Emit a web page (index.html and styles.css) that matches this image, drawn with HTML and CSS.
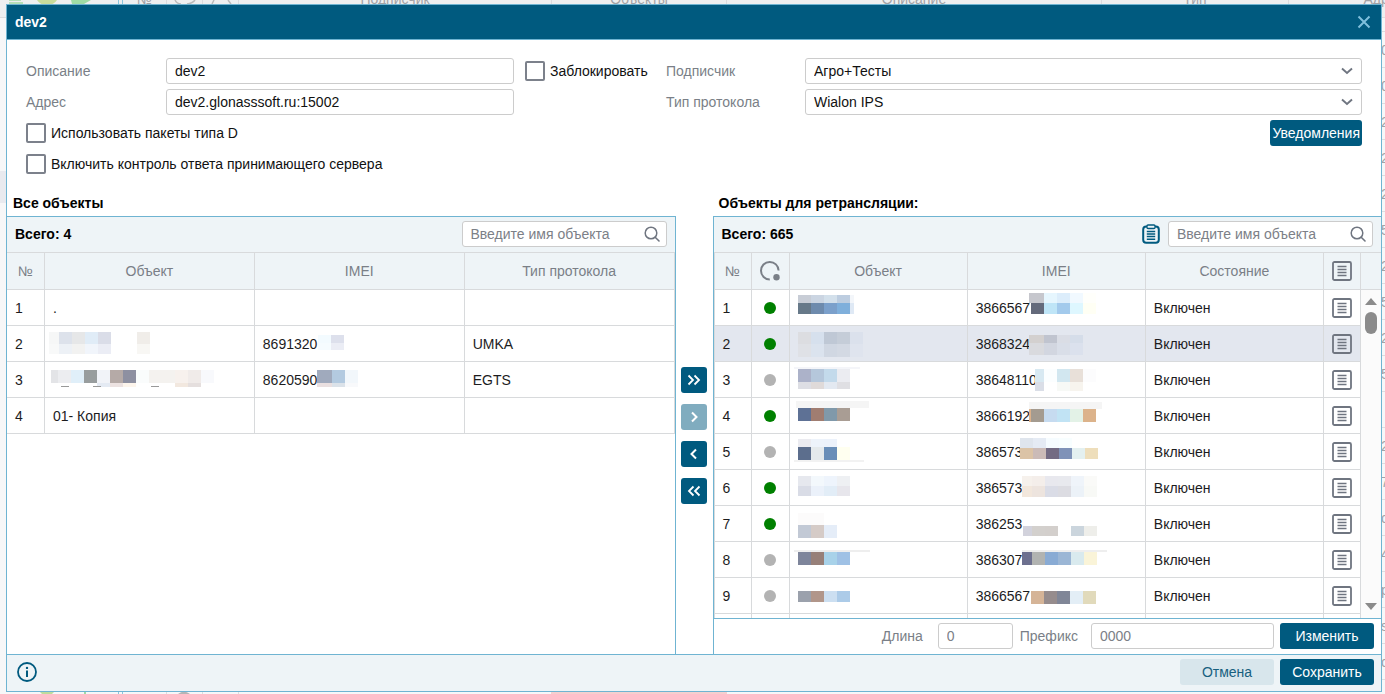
FILE: index.html
```html
<!DOCTYPE html>
<html lang="ru">
<head>
<meta charset="utf-8">
<title>dev2</title>
<link rel="stylesheet" href="styles.css">
</head>
<body>
<svg class="sprite" aria-hidden="true">
  <symbol id="i-search" viewBox="0 0 16 16"><circle cx="7" cy="7" r="5.8" fill="none" stroke="currentColor" stroke-width="1.5"/><path d="M11.2 11.2L15 15" fill="none" stroke="currentColor" stroke-width="1.6" stroke-linecap="round"/></symbol>
  <symbol id="i-down" viewBox="0 0 12 8"><path d="M1 1.5L6 6l5-4.500" fill="none" stroke="currentColor" stroke-width="1.900"/></symbol>
  <symbol id="i-list" viewBox="0 0 20 20"><rect x="1" y="1" width="18" height="18" rx="1.500" fill="none" stroke="currentColor" stroke-width="1.800"/><path d="M5.500 5.500h9M5.500 8.500h9M5.500 11.500h9M5.500 14.500h9" stroke="currentColor" stroke-width="1.400"/></symbol>
  <symbol id="i-clip" viewBox="0 0 18 20"><rect x="1.200" y="2.500" width="15.600" height="16.300" rx="3" fill="none" stroke="currentColor" stroke-width="2"/><rect x="5" y="1" width="8" height="3.500" rx="1" fill="#eef4f7" stroke="currentColor" stroke-width="1.300"/><path d="M4.800 7.500h8.400M4.800 10h8.400M4.800 12.500h8.400M4.800 15.200h8.400" stroke="currentColor" stroke-width="1.400"/></symbol>
  <symbol id="i-right" viewBox="0 0 14 14"><path d="M5 2.500L9.500 7 5 11.500" fill="none" stroke="currentColor" stroke-width="2"/></symbol>
  <symbol id="i-right2" viewBox="0 0 14 14"><path d="M1.500 2.500L6 7l-4.500 4.500M7.500 2.500L12 7l-4.500 4.500" fill="none" stroke="currentColor" stroke-width="1.800"/></symbol>
  <symbol id="i-left" viewBox="0 0 14 14"><path d="M9 2.500L4.500 7 9 11.500" fill="none" stroke="currentColor" stroke-width="2"/></symbol>
  <symbol id="i-left2" viewBox="0 0 14 14"><path d="M6.500 2.500L2 7l4.500 4.500M12.500 2.500L8 7l4.500 4.500" fill="none" stroke="currentColor" stroke-width="1.800"/></symbol>
</svg>

<div class="page" aria-hidden="true">
  <div class="page-head">
    <span class="c-tools"></span><span class="c-num">№</span><span class="c-ico"></span><span class="c-ico"></span><span class="c-sub">Подписчик</span><span class="c-obj">Объекты</span><span class="c-desc">Описание</span><span class="c-type">Тип</span><span class="c-addr">Адрес</span>
  </div>
  <div class="page-col">
    <span>0</span><span>0</span><span>2</span><span>2</span><span>2</span><span>5</span><span>2</span><span>5</span><span>2</span><span>5</span><span></span><span>2</span><span>7</span><span>c</span><span>4</span><span>p</span><span>s</span><span>c</span>
  </div>
  <div class="page-row-left"></div>
  <svg class="page-top" width="240" height="5" viewBox="0 0 240 5">
    <path d="M9 0h12M9 3h14" stroke="#a5dba5" stroke-width="1.500"/><path d="M37 0h20q-3 5-10 5t-10-5z" fill="#c9dc9c"/><path d="M71 0h20l-7 4h-12z" fill="#9fdca5"/>
    <path d="M118.500 0v5M122.500 0v5" stroke="#8cc5dc"/><path d="M175 0q2 4 6 4M187 4q6-1 8-4M214 0l-2 4M228 0l3 4" stroke="#bbb" fill="none" stroke-width="1.500"/>
  </svg>
  <svg class="page-bottom" width="760" height="3" viewBox="0 0 760 3">
    <path d="M39 0h16l-3 3h-10z" fill="#bfdc9c"/><path d="M84 0h2v3h-2z" fill="#9fdca5"/><path d="M118.500 0v3M122.500 0v3" stroke="#8cc5dc"/><path d="M166.500 0v3M202.500 0v3M238.500 0v3" stroke="#ddd"/><path d="M178 3q6-5 12 0z" fill="#b5b5b5"/><path d="M551 0h176v3H551z" fill="#f5cfcf"/>
  </svg>
</div>

<div class="dialog" role="dialog" aria-labelledby="title">
  <header class="dialog-head">
    <h1 id="title">dev2</h1>
    <button class="close" type="button" aria-label="Закрыть"><svg width="14" height="14" viewBox="0 0 14 14"><path d="M1.500 1.500l11 11M12.500 1.500l-11 11" stroke="currentColor" stroke-width="2"/></svg></button>
  </header>

  <form class="form">
    <label for="f-desc">Описание</label>
    <input class="field" id="f-desc" type="text" value="dev2">
    <label class="tick tick-lock"><input type="checkbox">Заблокировать</label>
    <label for="f-sub">Подписчик</label>
    <div class="select"><select class="field" id="f-sub"><option>Агро+Тесты</option></select><svg width="12" height="8"><use href="#i-down"/></svg></div>

    <label for="f-addr">Адрес</label>
    <input class="field" id="f-addr" type="text" value="dev2.glonasssoft.ru:15002">
    <label class="col-4" for="f-type">Тип протокола</label>
    <div class="select"><select class="field" id="f-type"><option>Wialon IPS</option></select><svg width="12" height="8"><use href="#i-down"/></svg></div>

    <label class="tick wide"><input type="checkbox">Использовать пакеты типа D</label>
    <button class="btn notify" type="button">Уведомления</button>
    <label class="tick wide"><input type="checkbox">Включить контроль ответа принимающего сервера</label>
  </form>

  <div class="lists">
    <section class="list list-all">
      <h2>Все объекты</h2>
      <div class="panel">
        <div class="bar"><strong>Всего: 4</strong>
          <div class="search"><input class="field" type="text" placeholder="Введите имя объекта" aria-label="Поиск по всем объектам"><svg width="16" height="16"><use href="#i-search"/></svg></div>
        </div>
        <table>
          <colgroup><col class="w-num"><col><col><col></colgroup>
          <thead><tr><th>№</th><th>Объект</th><th>IMEI</th><th>Тип протокола</th></tr></thead>
          <tbody id="all-rows"></tbody>
        </table>
      </div>
    </section>

    <div class="transfer">
      <button class="btn" type="button" aria-label="Добавить все"><svg width="14" height="14"><use href="#i-right2"/></svg></button>
      <button class="btn" type="button" aria-label="Добавить" disabled><svg width="14" height="14"><use href="#i-right"/></svg></button>
      <button class="btn" type="button" aria-label="Убрать"><svg width="14" height="14"><use href="#i-left"/></svg></button>
      <button class="btn" type="button" aria-label="Убрать все"><svg width="14" height="14"><use href="#i-left2"/></svg></button>
    </div>

    <section class="list list-relay">
      <h2>Объекты для ретрансляции:</h2>
      <div class="panel">
        <div class="bar"><strong>Всего: 665</strong>
          <button class="icon clip" type="button" aria-label="Вставить список"><svg width="18" height="20"><use href="#i-clip"/></svg></button>
          <div class="search"><input class="field" type="text" placeholder="Введите имя объекта" aria-label="Поиск по ретранслируемым объектам"><svg width="16" height="16"><use href="#i-search"/></svg></div>
        </div>
        <div class="scroll">
          <div class="scroll-body">
            <table>
              <colgroup><col class="w-short"><col class="w-num"><col><col><col><col class="w-menu"></colgroup>
              <thead><tr><th>№</th><th aria-label="Связь"><svg width="22" height="22" viewBox="0 0 22 22"><path d="M19.600 10.500A8.800 8.800 0 1 0 10.800 19.500" fill="none" stroke="currentColor" stroke-width="2"/><circle cx="17.500" cy="17.200" r="3.200" fill="currentColor"/></svg></th><th>Объект</th><th>IMEI</th><th>Состояние</th><th><button class="icon" type="button" aria-label="Меню"><svg width="20" height="20"><use href="#i-list"/></svg></button></th></tr></thead>
              <tbody id="relay-rows"></tbody>
            </table>
          </div>
          <div class="track" aria-hidden="true"><div class="track-head"></div><i class="up"></i><i class="thumb"></i><i class="down"></i></div>
        </div>
        <div class="edit">
          <label for="f-len">Длина</label><input class="field len" id="f-len" type="text" placeholder="0">
          <label for="f-pre">Префикс</label><input class="field pre" id="f-pre" type="text" placeholder="0000">
          <button class="btn action" type="button">Изменить</button>
        </div>
      </div>
    </section>
  </div>

  <footer class="dialog-foot">
    <button class="icon info" type="button" aria-label="Справка"><svg width="20" height="20" viewBox="0 0 20 20"><circle cx="10" cy="10" r="9" fill="none" stroke="currentColor" stroke-width="1.800"/><path d="M10 8.500V15" stroke="currentColor" stroke-width="2"/><circle cx="10" cy="5.900" r="1.200" fill="currentColor"/></svg></button>
    <button class="btn action cancel" type="button">Отмена</button>
    <button class="btn action" type="button">Сохранить</button>
  </footer>
</div>
<script src="rows.js"></script>
</body>
</html>
```
FILE: styles.css
```css
* { box-sizing: border-box; }
body { margin: 0; height: 100vh; overflow: hidden; background: #f7f7f8; color: #111; font: 14px/16px "Liberation Sans", Arial, sans-serif; }
h1, h2 { margin: 0; font-size: 14px; line-height: 16px; }
button, input, select { font: inherit; }
button { padding: 0; border: 0; cursor: pointer; }
svg { display: block; flex: none; }
.sprite { position: absolute; width: 0; height: 0; }

/* dimmed page under the dialog */
.page { position: absolute; inset: 0; overflow: hidden; color: #a3a3a6; }
.page-head { display: flex; height: 37px; margin-top: -19px; background: #eeeff0; border-bottom: 1px solid #dddddf; }
.page-head span { display: flex; flex: none; align-items: center; justify-content: center; border-right: 1px solid #dcdcde; }
.c-tools { width: 123px; }
.c-num { width: 44px; }
.c-ico { width: 36px; }
.c-sub { width: 313px; }
.c-obj { width: 175px; }
.c-desc { width: 375px; }
.c-type { width: 187px; }
.c-addr { width: 190px; }
.page-col { display: flex; flex-direction: column; width: 4px; margin: 13px 0 0 auto; border-top: 1px solid #dddddf; }
.page-col span { flex: none; height: 36px; padding-top: 10px; border-bottom: 1px solid #dddddf; }
.page-row-left { position: absolute; left: 0; top: 171px; width: 6px; height: 32px; background: #e9eaef; }
.page-top { position: absolute; left: 0; top: 0; }
.page-bottom { position: absolute; left: 0; bottom: 0; }

.dialog { position: absolute; inset: 4px 3px 2px 6px; display: flex; flex-direction: column; background: #fff; border: 1px solid #6fb4d2; }
.dialog-head { display: flex; align-items: center; justify-content: space-between; height: 35px; padding: 0 10px 0 8px; background: #005a7f; border-bottom: 1px solid #6fb4d2; color: #fff; }
.close { background: none; color: #7fbfdc; }

.field { width: 100%; min-width: 0; height: 26px; padding: 0 8px; border: 1px solid #ccc; border-radius: 3px; background: #fff; color: #111; outline: 0; }
.field::placeholder { color: #7c8087; opacity: 1; }
select.field { appearance: none; }
.select, .search { display: grid; align-items: center; }
.select > *, .search > * { grid-area: 1 / 1; }
.select svg, .search svg { justify-self: end; color: #6f7580; pointer-events: none; }
.select svg { margin-right: 9px; }
.search svg { margin-right: 7px; }

.btn { height: 26px; border-radius: 3px; background: #005a7f; color: #fff; }
.btn:disabled { background: #80acbf; cursor: default; }
.icon { display: inline-flex; background: none; color: #6f7580; }

.form { display: grid; grid-template-columns: 140px 348fr 152px 139px 557fr; grid-auto-rows: 26px; gap: 5px 0; align-items: center; padding: 18px 19px 0; color: #7a7f87; }
.tick { display: flex; align-items: center; gap: 5px; color: #111; }
.tick input { appearance: none; width: 20px; height: 20px; margin: 0; border: 2px solid #7c818b; border-radius: 2px; background: #fff; }
.tick-lock { padding-left: 11px; }
.col-4 { grid-column: 4; }
.wide { grid-column: 1 / 4; }
.notify { grid-column: 5; justify-self: end; padding: 0 2px; }

.lists { display: grid; grid-template-columns: minmax(0, 1fr) 37px minmax(0, 1fr); flex: 1; min-height: 0; padding-top: 18px; }
.list { display: flex; flex-direction: column; min-height: 0; color: #000; }
.list h2 { padding: 0 6px 5px; }
.panel { display: flex; flex-direction: column; flex: 1; min-height: 0; border-top: 1px solid #6fb4d2; }
.list-all .panel { border-right: 1px solid #6fb4d2; }
.list-relay .panel { border-left: 1px solid #6fb4d2; }
.bar { display: flex; flex: none; align-items: center; height: 36px; padding: 0 8px 1px; background: #eef4f7; border-bottom: 1px solid #d8dadc; }
.bar strong { flex: 1; }
.search { width: 205px; }
.clip { margin-right: 8px; color: #005a7f; }
.transfer { display: flex; flex-direction: column; align-items: center; justify-content: center; gap: 11px; padding-top: 21px; }
.transfer .btn { display: grid; place-items: center; width: 26px; }

table { width: 100%; table-layout: fixed; border-collapse: separate; border-spacing: 0; color: #1c1c1e; }
.w-num { width: 38px; }
.w-short, .w-menu { width: 37px; }
th { height: 37px; padding: 0; background: #eef4f7; border: solid #d8dadc; border-width: 0 1px 1px 0; color: #7a7f87; font-weight: 400; }
td { height: 36px; padding: 0 8px; border: solid #d8dadc; border-width: 0 1px 1px 0; }
td .icon, th .icon { display: flex; width: 20px; margin: 0 auto; }
th svg, .dot { margin: 0 auto; }
.center { padding: 0; text-align: center; }
.cell { display: flex; align-items: center; height: 35px; }
.mask { overflow: visible; }
.current td { background: #e3e7ef; }
.dot { display: block; width: 12px; height: 12px; border-radius: 50%; background: #b3b3b3; }
.dot.on { background: #008000; }

.scroll { display: flex; flex: 1; min-height: 0; border-bottom: 1px solid #6fb4d2; }
.scroll-body { flex: 1; min-width: 0; overflow: hidden; border-left: 1px solid #d8dadc; }
.track { display: flex; flex-direction: column; align-items: center; width: 20px; padding-bottom: 8px; background: #fbfbfb; }
.track-head { flex: none; width: 100%; height: 37px; background: #eef4f7; border-bottom: 1px solid #d8dadc; }
.up, .down { border: solid transparent; border-width: 0 6px; }
.up { margin-top: 8px; border-bottom: 7px solid #8b8b8b; }
.down { margin-top: auto; border-top: 7px solid #8b8b8b; }
.thumb { width: 12px; height: 22px; margin-top: 7px; border-radius: 6px; background: #8b8b8b; }

.edit { display: flex; align-items: center; justify-content: flex-end; height: 35px; padding: 0 7px 1px 0; color: #7a7f87; }
.len { width: 75px; margin: 0 7px 0 15px; }
.pre { width: 183px; margin: 0 6px 0 13px; }
.action { width: 94px; }

.lists + .dialog-foot { border-top: 1px solid #6fb4d2; }
.dialog-foot { display: flex; flex: none; align-items: center; gap: 6px; height: 37px; padding: 0 7px 2px 10px; background: #eef4f7; }
.info { margin-right: auto; color: #005a7f; }
.cancel { background: #d8e6ec; color: #17607f; }
```
FILE: rows.js
```js
// Hidden parts of names and numbers are drawn as colour strips:
// [x, y, height, colours, width of a square]; "-" leaves a gap.
function mask(strips) {
  if (!strips) return "";
  let out = "";
  for (const [x, y, h, colours, w = 13] of strips) {
    colours.split(" ").forEach((c, i) => {
      if (c !== "-") out += `<rect x="${x + i * w}" y="${y}" width="${w}" height="${h}" fill="#${c}"/>`;
    });
  }
  return `<svg class="mask" width="80" height="35" shape-rendering="crispEdges" aria-hidden="true">${out}</svg>`;
}

const cell = (text, strips) => `<td><div class="cell">${text}${mask(strips)}</div></td>`;

const all = [
  [".", null, "", null, ""],
  ["", [[-4, 6, 12, "f6f7f7", 10], [6, 6, 12, "dde2eb e6e7e8 e0ecf7 dadde8 - - f0ede9"], [-4, 18, 10, "f8f9f9", 10], [6, 18, 10, "edf1f6 f2f2f1 f1f5fb ebedf5 - - f8f7f4"]],
    "8691320", [[1, 9, 8, "f3fbff dde0ec"], [1, 17, 7, "f6fcff ebedf5"]], "UMKA"],
  ["", [[-2, 8, 13, "e3e4e7", 7], [5, 8, 13, "ecedf0 e0eff9 989d9e f1f3f8 b5aaa7 8e90a1 fafcfc f4f2ef f4f2ef f7f1ed f0ebe9 f8f9fc"], [44, 21, 4, "e4eaf3 ece2e1 fdf5ec - - - f2e8df e5dfde"], [8, 24, 1, "999", 8], [40, 24, 1, "999", 8], [98, 24, 1, "999", 8]],
    "8620590", [[0, 8, 13, "a0aabd", 15], [15, 8, 13, "b3cae0 f2f7fb"], [0, 21, 4, "e9dfe0", 15], [15, 21, 4, "dbe2e9 f8f9fb"]], "EGTS"],
  ["01- Копия", null, "", null, ""]
];

const relay = [
  [1, [[0, 5, 8, "c8cdd6 cbd5e2 d3e0eb bdcde0"], [52, 5, 8, "f3f6fa", 4], [0, 13, 11, "677989 6e8bad 7ba0cb 7fafdb"], [52, 13, 11, "dfe9f5", 4]],
    "3866567", [[-1, 3, 10, "c6c7cd", 15], [14, 3, 10, "e6f6fe dcedfb f1f9ff fffffb"], [1, 13, 11, "646a7b bfe5f7 a3caec def7ff fffff4"]]],
  [1, [[0, 6, 12, "dcdde1 d6e0ed bfc8d5 c5cdd8 dbe1ec"], [0, 18, 13, "dfe1e6 dbe3ee d0d7e2 d3d9e3 dfe4ee"]],
    "3868324", [[-1, 9, 8, "d3d0cf", 15], [14, 9, 8, "c0c4cf dadde5 d5dde9"], [-1, 17, 12, "d9dade", 15], [14, 17, 12, "d2d6e0 d9dee8 dbe1ed"]]],
  [0, [[-4, 5, 2, "f4f5f9", 66], [0, 7, 13, "acb2c9 b5c7db c3daeb ebecf1"], [0, 20, 7, "dddee4 dfdad9 e3e9f1 dfdfe3"]],
    "38648110", [[-2, 7, 13, "d8e9f2", 9], [7, 7, 13, "fbfeff d2e7f0 e8e0d9 fcfcfd"], [-2, 20, 9, "dadee7", 9], [20, 20, 9, "f7f9f6 f7f4ee"]]],
  [1, [[-2, 3, 7, "f5f5f5", 73], [0, 10, 13, "5e7195 a07d71 8099aa a99d94"]],
    "3866192", [[-1, 4, 7, "f5f5f5", 73], [-1, 11, 13, "dcb18a", 2], [1, 11, 13, "a49b90 c6dbf0 c1e3f4 e3f2e7 dcb38b"]]],
  [0, [[0, 5, 8, "ebebf0 edf3fb ecf2fb"], [0, 13, 13, "5c6e8d e4e9ec 698eb8 fffff0"], [-4, 26, 2, "f2f2f2", 70]],
    "386573", [[-2, 4, 10, "dfe5ed e5ebf4 f6fcff f8feff"], [-2, 14, 11, "dbc3a6 cbbbb7 736b83 7f92b8 e4f0f0 eedebb"]]],
  [1, [[0, 6, 10, "e6e8ee f3f8fc eef4fc eef0f3"], [0, 16, 10, "d9dce6 ebf1fa e2edf7 e7e6ec"]],
    "386573", [[0, 6, 10, "f6f1ec", 10], [10, 6, 10, "f4eeea e8e8ee e8e9ee eff4fa fafaf8"], [0, 16, 11, "f2e7dc", 10], [10, 16, 11, "ede4de dadce6 dcdce2 ecf2f8 f8f9f6"]]],
  [1, [[0, 7, 12, "fcfbfb fcfbfb"], [0, 19, 13, "c2c9d5 d5cbc7 e5edf8"]],
    "386253", [[1, 20, 10, "d2d2dc", 9], [10, 20, 10, "d3d0cd d3cfcc - cbd5dd eeeeea"]]],
  [0, [[-4, 8, 2, "eeeeee", 76], [0, 10, 13, "7e859b 978079 a8d2e9 9fc1e5"]],
    "386307", [[0, 8, 2, "eeeeee", 85], [0, 10, 13, "6d708f", 10], [10, 10, 13, "b1b3b1 89abd4 9bb6d5 d9eaee faf4d8"]]],
  [0, [[0, 13, 11, "9ba1ac b1968a ccdff1 accbe8"]],
    "3866567", [[1, 13, 13, "d5b497 968c8d 808697 e3eef6 e1dabb"]]]
];

document.getElementById("all-rows").innerHTML = all.map(([name, nm, imei, im, type], i) =>
  `<tr><td>${i + 1}</td>${cell(name, nm)}${cell(imei, im)}<td>${type}</td></tr>`).join("");

document.getElementById("relay-rows").innerHTML = relay.map(([on, nm, imei, im], i) =>
  `<tr class="${i === 1 ? "current" : ""}"><td>${i + 1}</td><td class="center"><span class="dot ${on ? "on" : ""}"></span></td>${cell("", nm)}${cell(imei, im)}<td>Включен</td>` +
  `<td class="center"><button class="icon" type="button" aria-label="Меню строки ${i + 1}"><svg width="20" height="20"><use href="#i-list"/></svg></button></td></tr>`).join("") +
  "<tr>" + "<td></td>".repeat(6) + "</tr>";
```
